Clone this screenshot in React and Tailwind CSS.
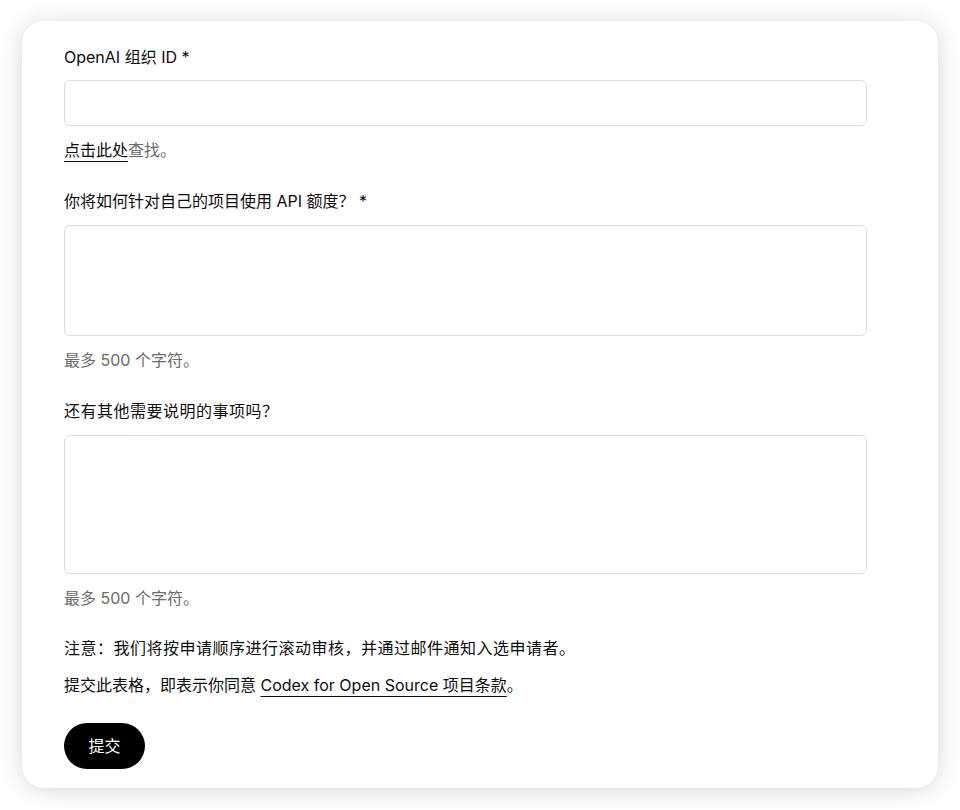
export default function App() {
  return (
    <div
      className="min-h-[810px] bg-white pt-[21px] pl-[22px] text-[16px] leading-[22px] text-[#0d0d0d]"
      style={{ fontFamily: 'Inter, "Noto Sans CJK SC", sans-serif' }}
    >
      <form className="w-[916px] h-[767px] bg-white rounded-[22px] shadow-[0_2px_22px_rgba(0,0,0,0.16)] pt-[25px] pl-[42px] pr-[71px]">
        <label className="block">OpenAI 组织 ID *</label>
        <input className="block mt-[12px] w-full h-[46px] border border-[#dcdcdc] rounded-[6px] outline-none px-3" />
        <p className="mt-[13px] text-[#6b6b6b]">
          <a className="text-[#0d0d0d] underline underline-offset-[5px] decoration-1">点击此处</a>查找。
        </p>

        <label className="block mt-[29px]">你将如何针对自己的项目使用 API 额度？ *</label>
        <textarea className="block mt-[13px] w-full h-[111px] border border-[#dcdcdc] rounded-[6px] outline-none resize-none p-3" />
        <p className="mt-[13px] text-[#6b6b6b]">最多 500 个字符。</p>

        <label className="block mt-[29px] tracking-[0.5px]">还有其他需要说明的事项吗？</label>
        <textarea className="block mt-[13px] w-full h-[139px] border border-[#dcdcdc] rounded-[6px] outline-none resize-none p-3" />
        <p className="mt-[13px] text-[#6b6b6b]">最多 500 个字符。</p>

        <p className="mt-[28px] tracking-[0.5px]">注意：我们将按申请顺序进行滚动审核，并通过邮件通知入选申请者。</p>
        <p className="mt-[15px]">
          提交此表格，即表示你同意{' '}
          <a className="underline underline-offset-[5px] decoration-1">Codex for Open Source 项目条款</a>。
        </p>

        <button type="button" className="mt-[27px] h-[46px] w-[81px] rounded-full bg-black text-white">
          提交
        </button>
      </form>
    </div>
  );
}
